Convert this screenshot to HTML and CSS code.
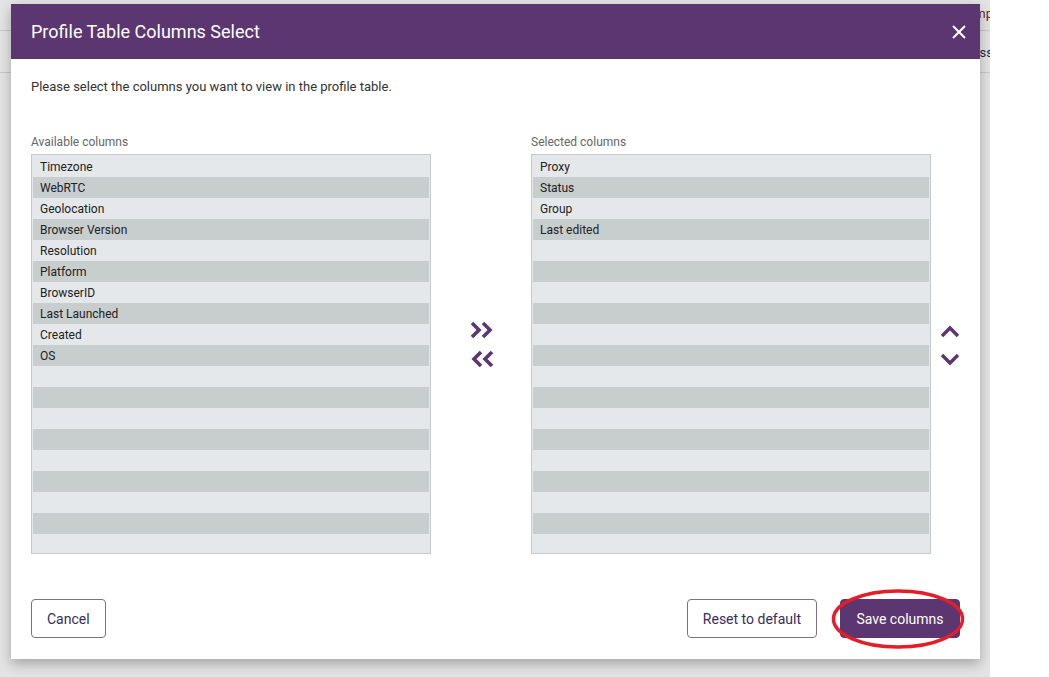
FILE: index.html
```html
<!DOCTYPE html>
<html>
<head>
<meta charset="utf-8">
<link rel="stylesheet" href="styles.css">
</head>
<body>
<div class="page">
  <div class="bg-row bg-row-1"><span class="bg-text bg-red">Bump</span></div>
  <div class="bg-row bg-row-2"><span class="bg-text bg-blue">Address</span></div>

  <div class="modal">
    <div class="modal-header">
      <h1 class="modal-title">Profile Table Columns Select</h1>
      <svg class="close" width="14" height="14" viewBox="0 0 14 14"><path d="M1 1 L13 13 M13 1 L1 13" stroke="#fff" stroke-width="2" fill="none"/></svg>
    </div>
    <div class="modal-body">
      <p class="intro">Please select the columns you want to view in the profile table.</p>
      <div class="columns">
        <div class="col">
          <div class="col-label">Available columns</div>
          <div class="list">
            <div class="row">Timezone</div>
            <div class="row">WebRTC</div>
            <div class="row">Geolocation</div>
            <div class="row">Browser Version</div>
            <div class="row">Resolution</div>
            <div class="row">Platform</div>
            <div class="row">BrowserID</div>
            <div class="row">Last Launched</div>
            <div class="row">Created</div>
            <div class="row">OS</div>
            <div class="row"></div><div class="row"></div><div class="row"></div>
            <div class="row"></div><div class="row"></div><div class="row"></div>
            <div class="row"></div><div class="row"></div><div class="row"></div>
          </div>
        </div>
        <div class="mid">
          <svg width="26" height="18" viewBox="0 0 26 18"><path d="M3 2 L10 9 L3 16 M14 2 L21 9 L14 16" stroke="#5b3670" stroke-width="3.6" fill="none"/></svg>
          <svg width="26" height="18" viewBox="0 0 26 18"><path d="M23 2 L16 9 L23 16 M12 2 L5 9 L12 16" stroke="#5b3670" stroke-width="3.6" fill="none"/></svg>
        </div>
        <div class="col">
          <div class="col-label">Selected columns</div>
          <div class="list">
            <div class="row">Proxy</div>
            <div class="row">Status</div>
            <div class="row">Group</div>
            <div class="row">Last edited</div>
            <div class="row"></div><div class="row"></div><div class="row"></div>
            <div class="row"></div><div class="row"></div><div class="row"></div>
            <div class="row"></div><div class="row"></div><div class="row"></div>
            <div class="row"></div><div class="row"></div><div class="row"></div>
            <div class="row"></div><div class="row"></div><div class="row"></div>
          </div>
        </div>
        <div class="side">
          <svg width="20" height="13" viewBox="0 0 20 13"><path d="M2 11 L10 3 L18 11" stroke="#5b3670" stroke-width="3.4" fill="none"/></svg>
          <svg width="20" height="13" viewBox="0 0 20 13"><path d="M2 2 L10 10 L18 2" stroke="#5b3670" stroke-width="3.4" fill="none"/></svg>
        </div>
      </div>
      <div class="footer">
        <button class="btn btn-outline">Cancel</button>
        <div class="footer-right">
          <button class="btn btn-outline">Reset to default</button>
          <div class="save-wrap">
            <button class="btn btn-primary">Save columns</button>
            <svg class="ring" width="134" height="62" viewBox="0 0 134 62"><ellipse cx="67" cy="31" rx="64.5" ry="28" stroke="#e41e28" stroke-width="3.5" fill="none"/></svg>
          </div>
        </div>
      </div>
    </div>
  </div>
</div>
</body>
</html>
```

FILE: styles.css
```css
* { box-sizing: border-box; }
html, body { margin: 0; padding: 0; background: #ffffff; }
body { font-family: Roboto, "Liberation Sans", sans-serif; }

.page {
  position: relative;
  width: 990px;
  height: 677px;
  background: #e4e4e4;
  overflow: hidden;
}

.bg-row {
  display: flex;
  justify-content: flex-end;
  align-items: center;
  border-bottom: 1px solid #c9c9c9;
  font-size: 13px;
}
.bg-row-1 { height: 31px; padding-bottom: 3px; }
.bg-row-2 { height: 42px; padding-top: 2px; }
.bg-text { margin-right: -3px; white-space: nowrap; }
.bg-red { color: #6a1d28; }
.bg-blue { color: #1d2a44; }

.modal {
  position: absolute;
  left: 11px;
  top: 4px;
  width: 969px;
  height: 655px;
  background: #ffffff;
  box-shadow: 0 5px 12px rgba(0, 0, 0, 0.28);
  display: flex;
  flex-direction: column;
}

.modal-header {
  height: 55px;
  background: #5b3670;
  display: flex;
  align-items: center;
  justify-content: space-between;
  padding: 0 14px 0 20px;
}
.modal-title {
  margin: 0;
  font-size: 18px;
  font-weight: 400;
  color: #ffffff;
}
.close { display: block; margin-right: 0; }

.modal-body {
  flex: 1;
  display: flex;
  flex-direction: column;
  padding: 19px 20px 21px 20px;
}
.intro {
  margin: 0;
  font-size: 13px;
  line-height: 18px;
  color: #333333;
}

.columns {
  display: flex;
  margin-top: 38px;
}
.col { width: 400px; }
.col-label {
  font-size: 12px;
  line-height: 16px;
  color: #666666;
  margin-bottom: 4px;
}
.list {
  height: 400px;
  border: 1px solid #c6cacc;
  background: #e4e8ea;
  padding: 1px 1px;
  overflow: hidden;
}
.row {
  height: 21px;
  line-height: 23px;
  overflow: hidden;
  padding-left: 7px;
  font-size: 12px;
  color: #222222;
}
.row:nth-child(even) { background: #c8cdce; }

.mid {
  width: 100px;
  display: flex;
  flex-direction: column;
  align-items: center;
  justify-content: center;
  gap: 11px;
  padding-left: 1px;
}
.mid svg, .side svg { display: block; }

.side {
  width: 29px;
  display: flex;
  flex-direction: column;
  align-items: flex-end;
  justify-content: center;
  gap: 15px;
  padding-top: 2px;
}

.footer {
  margin-top: auto;
  display: flex;
  justify-content: space-between;
  align-items: center;
}
.footer-right {
  display: flex;
  align-items: center;
  gap: 23px;
}
.btn {
  height: 39px;
  border-radius: 4px;
  font-family: Roboto, "Liberation Sans", sans-serif;
  font-size: 14px;
  padding: 0 15px;
  cursor: pointer;
}
.btn-outline {
  background: #ffffff;
  border: 1px solid #7d6e8e;
  color: #382c5e;
}
.btn-primary {
  background: #5b3670;
  border: 1px solid #5b3670;
  color: #ffffff;
  width: 120px;
  padding: 0;
}
.save-wrap { position: relative; }
.ring {
  position: absolute;
  left: -9px;
  top: -11px;
  pointer-events: none;
}
```
